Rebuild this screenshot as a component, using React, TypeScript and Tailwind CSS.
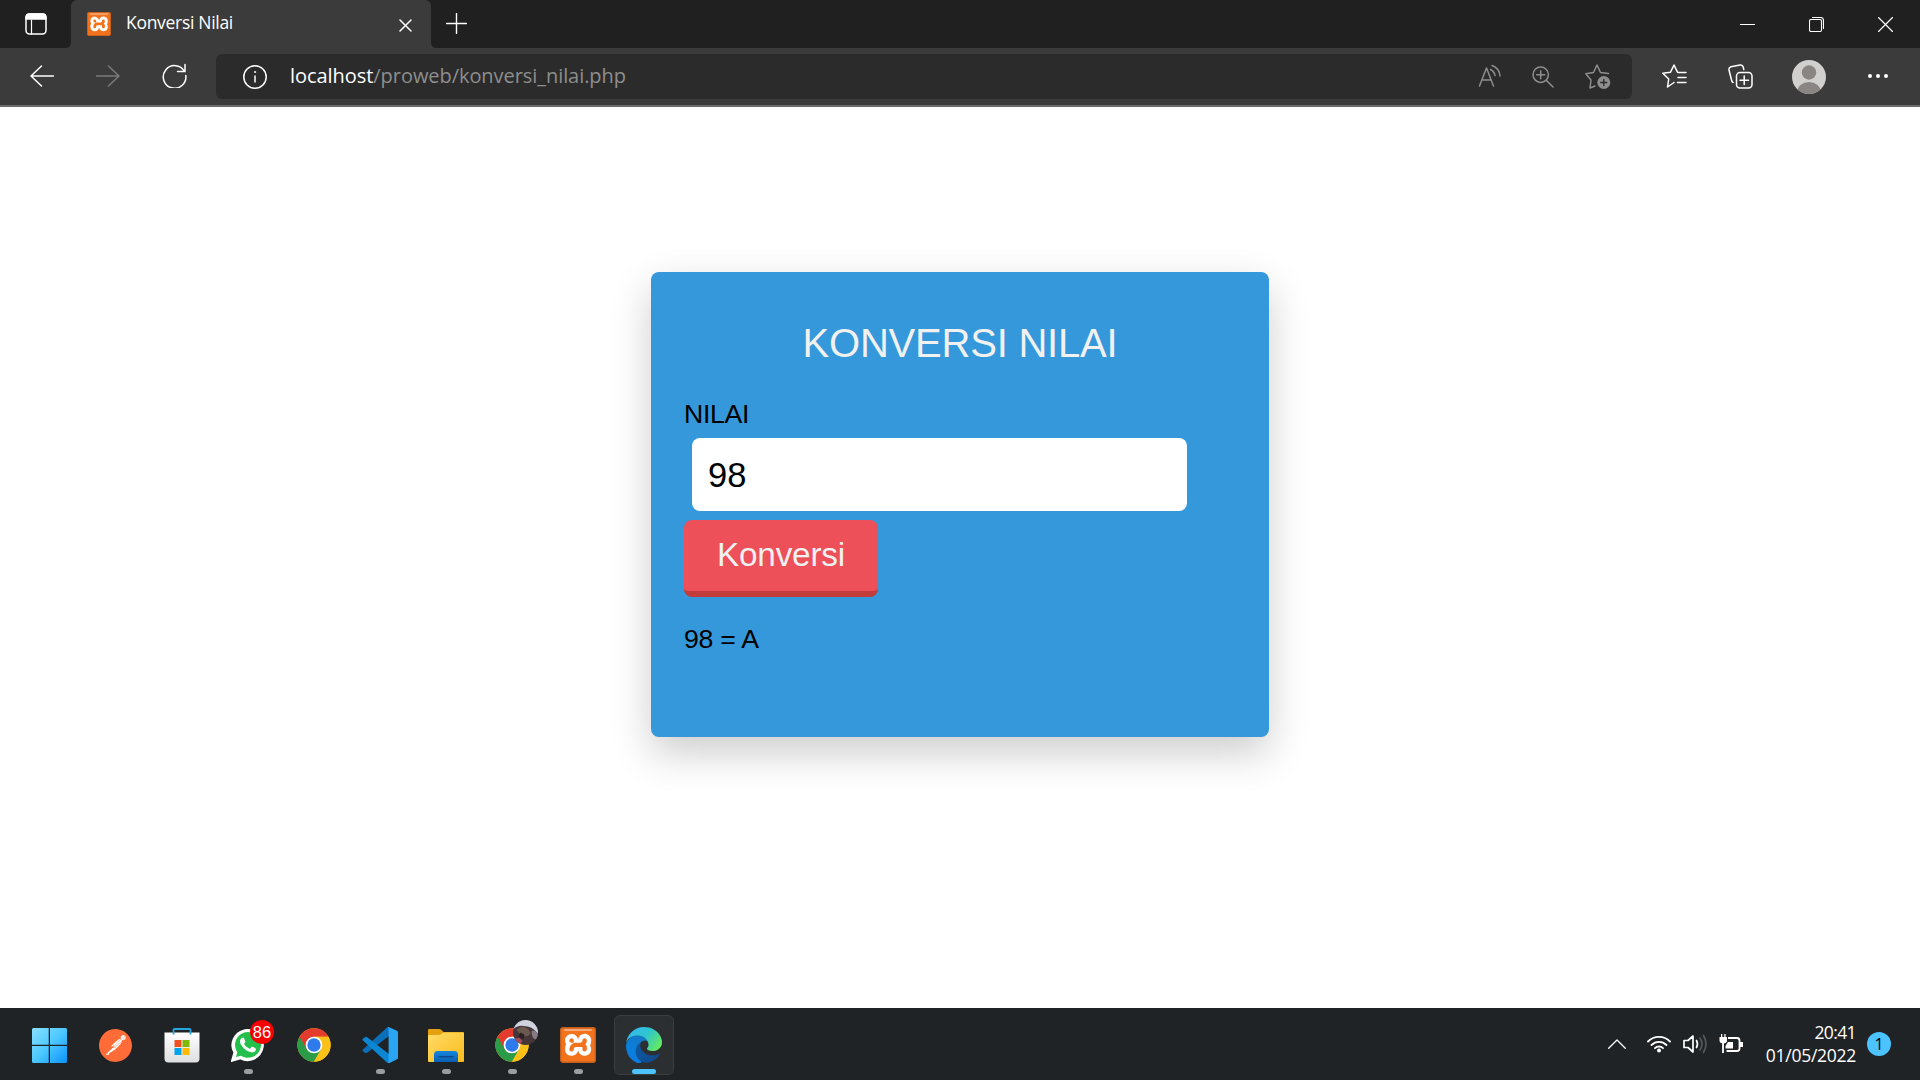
import type { ReactNode } from "react";
import { SiXampp, SiPostman } from "react-icons/si";
import { FaWhatsapp } from "react-icons/fa";

function Stroke({ w, h, sw = 1.5, className = "", children }: { w: number; h: number; sw?: number; className?: string; children: ReactNode }) {
  return (
    <svg width={w} height={h} viewBox={`0 0 ${w} ${h}`} fill="none" stroke="currentColor" strokeWidth={sw} strokeLinecap="round" strokeLinejoin="round" className={`block shrink-0 ${className}`}>
      {children}
    </svg>
  );
}

function Xampp({ size }: { size: number }) {
  return (
    <svg width={size} height={size} viewBox="0 0 36 36" className="block shrink-0">
      <rect x="3" y="5" width="30" height="27" fill="#fff" />
      <SiXampp x="0" y="0" width="36" height="36" size={36} color="#f3731d" />
      <rect x=".7" y=".7" width="34.6" height="34.6" rx="2.5" fill="none" stroke="#c4601f" strokeWidth="1.4" />
      <rect x="4" y="2" width="28" height="2" rx="1" fill="#f6ab7c" />
    </svg>
  );
}

function Chrome() {
  return (
    <svg width="34" height="34" viewBox="0 0 48 48" className="block">
      <circle cx="24" cy="24" r="23.5" fill="#fbc116" />
      <path d="M24 24 3.65 12.25A23.5 23.5 0 0 0 24 47.5L34.2 29.9Z" fill="#2c9b48" />
      <path d="M3.65 12.25A23.5 23.5 0 0 1 44.4 12.3H24L13.8 29.9Z" fill="#e33b2e" />
      <path d="M24 12.3h20.4A23.5 23.5 0 0 1 24 47.5l10.2-17.6Z" fill="#fbc116" />
      <circle cx="24" cy="24" r="11.8" fill="#fff" />
      <circle cx="24" cy="24" r="9.4" fill="#2f7bee" />
    </svg>
  );
}

function WindowsLogo() {
  return (
    <svg width="35" height="35" viewBox="0 0 35 35" className="mr-[2px]">
      <defs>
        <linearGradient id="win" x1="0" y1="0" x2="1" y2="1">
          <stop offset="0" stopColor="#8ae0ff" />
          <stop offset=".5" stopColor="#4cc8ff" />
          <stop offset="1" stopColor="#0a93fa" />
        </linearGradient>
      </defs>
      <path fill="url(#win)" d="M1.5 0H16.7V16.7H0V1.5Q0 0 1.5 0ZM18 0H33.5Q35 0 35 1.5V16.7H18ZM0 18H16.7V35H1.5Q0 35 0 33.5ZM18 18H35V33.5Q35 35 33.5 35H18Z" />
    </svg>
  );
}

function Postman() {
  return (
    <svg width="33" height="33" viewBox="0 0 33 33" className="mr-px">
      <circle cx="16.5" cy="16.5" r="15.5" fill="#fff" />
      <SiPostman x="0" y="0" size={33} color="#ff6c37" />
    </svg>
  );
}

function Store() {
  return (
    <svg width="36" height="36" viewBox="0 0 36 36" className="mr-px">
      <defs>
        <linearGradient id="bag" x1="0" y1="0" x2="0" y2="1">
          <stop offset="0" stopColor="#fff" />
          <stop offset="1" stopColor="#dedede" />
        </linearGradient>
      </defs>
      <path d="M.5 5.500h35V31.500q0 4-4 4h-27q-4 0-4-4Z" fill="url(#bag)" />
      <path d="M9.500 7.500V3q0-1 1-1h15q1 0 1 1v4.500" fill="none" stroke="#22a7e0" strokeWidth="1.800" />
      <path d="M10.500 13h7v7h-7z" fill="#f25022" />
      <path d="M18.500 13h7v7h-7z" fill="#7fba00" />
      <path d="M10.500 21h7v7h-7z" fill="#00a4ef" />
      <path d="M18.500 21h7v7h-7z" fill="#ffb900" />
    </svg>
  );
}

function WhatsApp() {
  return (
    <svg width="34" height="34" viewBox="0 0 34 34">
      <path d="M1 33 3.300 24.500A15 15 0 1 1 9.500 30.700Z" fill="#25c04c" />
      <FaWhatsapp x="-1" y="-1" size={36} color="#fff" />
      <path d="M1.300 32.500 3.600 24.500A14.800 14.800 0 1 1 9.500 30.200Z" fill="none" stroke="#fff" strokeWidth="2.400" />
    </svg>
  );
}

function VsCode() {
  return (
    <svg width="36" height="36" viewBox="0 0 36 36">
      <path d="M.7 22.800 25 .6Q26 0 27 .3V9L5.200 25.800Q4 26.600 3 25.800L.8 24.200Q0 23.500 .7 22.800Z" fill="#0a6fb8" />
      <path d="M.7 13.200 25 35.400Q26 36 27 35.700V27L5.200 10.200Q4 9.400 3 10.200L.8 11.800Q0 12.500 .7 13.200Z" fill="#0b86d2" />
      <path d="M26.500 0 35 3.700Q36 4.200 36 5.300V30.700Q36 31.800 35 32.300L27.600 35.900Q26.500 36.200 25.500 35.500 26.600 35 26.600 33.500V2.500Q26.600 1 25.500.5Q26 0 26.500 0Z" fill="#2aa5f3" />
    </svg>
  );
}

function Explorer() {
  return (
    <svg width="36" height="33" viewBox="0 0 36 33">
      <defs>
        <linearGradient id="fold" x1="0" y1="0" x2="1" y2="1">
          <stop offset="0" stopColor="#ffdc68" />
          <stop offset="1" stopColor="#fcbb1c" />
        </linearGradient>
        <linearGradient id="hand" x1="0" y1="0" x2="0" y2="1">
          <stop offset="0" stopColor="#1588dc" />
          <stop offset="1" stopColor="#0b5fb4" />
        </linearGradient>
      </defs>
      <path d="M0 1q0-1 1-1h10q1.500 0 2.500 1l2 2H35q1 0 1 1v10H0Z" fill="#e3a00f" />
      <path d="M0 6h10q2 0 3.500-1.200Q15 3.500 17 3.500H35q1 0 1 1V32q0 1-1 1H1q-1 0-1-1Z" fill="url(#fold)" />
      <path d="M6 33V25.500q0-3.500 3.500-3.500h17q3.500 0 3.500 3.500V33Z" fill="url(#hand)" />
      <path d="M11 27.700h14" stroke="#0b4a8c" strokeWidth="1.400" strokeLinecap="round" />
    </svg>
  );
}

function EdgeLogo() {
  return (
    <svg width="36" height="36" viewBox="0 0 256 256">
      <defs>
        <linearGradient id="e1" x1=".2" y1="0" x2="1" y2=".6">
          <stop offset="0" stopColor="#0c59a4" />
          <stop offset="1" stopColor="#114a8b" />
        </linearGradient>
        <linearGradient id="e2" x1=".7" y1="0" x2=".3" y2="1">
          <stop offset="0" stopColor="#1478c4" />
          <stop offset=".6" stopColor="#0b7fdc" />
          <stop offset="1" stopColor="#0a78de" />
        </linearGradient>
        <linearGradient id="e3" x1="0" y1=".2" x2="1" y2=".7">
          <stop offset="0" stopColor="#35b9f1" />
          <stop offset=".5" stopColor="#2ec5cf" />
          <stop offset="1" stopColor="#66eb5e" />
        </linearGradient>
      </defs>
      <path fill="url(#e1)" d="M235.680 190.380a93.730 93.730 0 0 1-10.540 4.710 101.870 101.870 0 0 1-35.900 6.460c-47.320 0-88.540-32.550-88.540-74.320A31.480 31.480 0 0 1 117.130 99.830c-42.800 1.800-53.800 46.400-53.800 72.530 0 73.880 68.090 81.370 82.760 81.370 7.910 0 19.840-2.300 27-4.560l1.310-.44a128.340 128.340 0 0 0 66.600-52.800 4 4 0 0 0-5.320-5.550z" />
      <path fill="url(#e2)" d="M105.730 241.420a79.200 79.200 0 0 1-22.740-21.340 80.720 80.720 0 0 1 34.140-120.250c3.570-1.680 9.660-4.710 17.780-4.560a33.790 33.790 0 0 1 26.800 13.510 33.900 33.900 0 0 1 6.600 19.200c0-.21 -8.310-69.640-88.310-69.640-43.900 0-80 41.660-80 78.210a130.150 130.150 0 0 0 12.110 56 128 128 0 0 0 156.380 67.110 75.550 75.550 0 0 1-62.780-8z" />
      <path fill="url(#e3)" d="M152.330 148.860c-.81 1.050-3.300 2.500-3.300 5.660 0 2.610 1.700 5.120 4.720 7.230 14.380 10 41.490 8.680 41.560 8.680a59.560 59.560 0 0 0 30.270-8.350A61.380 61.380 0 0 0 256 109.230c.26-22.410-8-37.310-11.340-43.910C223.460 23.840 177.720 0 128 0A128 128 0 0 0 0 126.200c.48-36.540 36.800-66.050 80-66.050 3.500 0 23.460.34 42 10.070 16.340 8.580 24.900 18.940 30.850 29.210 6.180 10.670 7.280 24.150 7.280 29.520s-2.740 13.330-7.800 19.910z" />
    </svg>
  );
}

function ProfileBadge() {
  return (
    <svg width="25" height="25" viewBox="0 0 24 24" className="absolute top-[5px] left-[31px]">
      <clipPath id="pb"><circle cx="12" cy="12" r="12" /></clipPath>
      <g clipPath="url(#pb)">
        <path d="M0 0h24v24H0z" fill="#45363a" />
        <path d="M0 9Q5 4 12 6q6 0 12 7V0H0Z" fill="#cfd3dd" />
        <path d="M3 9q6-5 12 0l2 4q-3 4-9 2Z" fill="#6b584e" />
        <path d="M18 10q4 0 6 3v6q-5 0-6-5Z" fill="#857b84" />
        <path d="M1 18l5-1 3 3-2 4H2z" fill="#a24d58" />
        <path d="M7 12l4 2-1 5-5-3z" fill="#2b2020" />
      </g>
    </svg>
  );
}

function TaskItem({ children, state }: { children: ReactNode; state?: "open" | "active" }) {
  return (
    <div className={`relative flex h-[60px] w-[60px] items-center justify-center rounded-md ${state === "active" ? "border border-[#393d40] bg-[#2c2f32]" : ""}`}>
      {children}
      {state === "open" && <span className="absolute bottom-[1px] left-[26px] h-[5px] w-[9px] rounded-full bg-[#9b9d9e]" />}
      {state === "active" && <span className="absolute bottom-0 left-[17px] h-[5px] w-6 rounded-full bg-[#4cc2ff]" />}
    </div>
  );
}

function TabStrip() {
  return (
    <div className="flex h-12 items-stretch bg-[#202020] text-white">
      <div className="flex w-[71px] items-center pl-[25px]">
        <Stroke w={22} h={22}>
          <rect x="1" y="1" width="20" height="20" rx="3.500" />
          <path d="M1 6V4.500Q1 1 4.500 1h13Q21 1 21 4.500V6Z" fill="currentColor" />
          <path d="M6.500 7v14" strokeWidth="1.200" />
        </Stroke>
      </div>
      <div className="relative flex w-[360px] items-center rounded-t-md bg-[#3b3b3b] pl-4">
        <svg width="6" height="6" viewBox="0 0 6 6" className="absolute bottom-0 -left-[6px]"><path d="M6 0v6H0Q6 6 6 0" fill="#3b3b3b" /></svg>
        <svg width="6" height="6" viewBox="0 0 6 6" className="absolute -right-[6px] bottom-0"><path d="M0 0v6h6Q0 6 0 0" fill="#3b3b3b" /></svg>
        <Xampp size={24} />
        <span className="mb-[2px] ml-[15px] w-[273px] text-[17.500px] leading-none tracking-[-0.300px] whitespace-nowrap">Konversi Nilai</span>
        <Stroke w={13} h={13} className="mt-[2px]"><path d="M1 1l11 11M12 1 1 12" /></Stroke>
      </div>
      <div className="flex flex-1 items-center pl-[15px]">
        <Stroke w={21} h={21} className="mb-[2px]"><path d="M10.500.5v20M.5 10.500h20" strokeWidth="1.400" /></Stroke>
      </div>
      <div className="flex items-center gap-[54px] pr-[27px]">
        <Stroke w={15} h={15} sw={1}><path d="M0 7.500h15" /></Stroke>
        <Stroke w={15} h={15} sw={1.1}>
          <rect x=".5" y="2.500" width="12" height="12" rx="1.500" />
          <path d="M3.500.5h8q3 0 3 3v8" />
        </Stroke>
        <Stroke w={15} h={15} sw={1.2}><path d="M.5.5l14 14M14.500.5l-14 14" /></Stroke>
      </div>
    </div>
  );
}

function Toolbar() {
  return (
    <div className="flex h-[59px] items-center border-b-2 border-[#6b6b6b] bg-[#3b3b3b] text-white">
      <div className="flex w-[216px] items-center gap-[42px] pb-[2px] pl-[30px]">
        <Stroke w={24} h={22}><path d="M11.500 1 1 11l10.500 10M1 11h22.500" /></Stroke>
        <Stroke w={24} h={22} className="text-[#7b7b7b]"><path d="M12.500 1 23 11 12.500 21M23 11H.5" /></Stroke>
        <Stroke w={25} h={25}><path d="M22.500 8.500A11.300 11.300 0 1 0 23.800 12.500M23 1.500v7h-7.500" strokeLinejoin="miter" /></Stroke>
      </div>
      <div className="flex h-[45px] w-[1416px] items-center rounded-md bg-[#2b2b2b] pr-[21px] pl-[27px]">
        <Stroke w={24} h={24}>
          <circle cx="12" cy="12" r="11.200" />
          <path d="M12 11v6" />
          <circle cx="12" cy="7" r=".6" fill="currentColor" strokeWidth=".8" />
        </Stroke>
        <span className="mb-px ml-[23px] flex-1 text-[20px] leading-none tracking-[-0.060px] whitespace-nowrap text-[#8e8e8e]">
          <span className="tracking-[-0.050px] text-white">localhost</span>
          <span>/proweb/konversi_nilai.php</span>
        </span>
        <div className="flex items-center text-[#8e8e8e]">
          <Stroke w={24} h={24} className="mb-px">
            <path d="M1.500 22 8.500 4l7 18M4 16h9" />
            <path d="M12.500 5.500a8 8 0 0 1 4.500 6M14 1.500a12 12 0 0 1 8 10.500" />
          </Stroke>
          <Stroke w={22} h={22} className="ml-[30px]">
            <circle cx="8.700" cy="8.700" r="7.700" />
            <path d="M14.500 14.500l6.500 6.500M8.700 4.700v8M4.700 8.700h8" />
          </Stroke>
          <Stroke w={26} h={26} className="ml-[31px]">
            <path d="M10 22l-5 2 1-8L.8 9.800 8.500 8.500 12 1l3.500 7.500 8 1" />
            <circle cx="18.800" cy="18.500" r="6.500" fill="currentColor" stroke="none" />
            <path d="M18.800 15.500v6M15.800 18.500h6" stroke="#2b2b2b" strokeWidth="1.300" />
          </Stroke>
        </div>
      </div>
      <div className="flex items-center pl-[30px]">
        <Stroke w={25} h={25}>
          <path d="M12 18.500 5.500 23l1.200-8L.8 9.300l7.700-1.100L12 1l3.500 7.200 1 .3h7.500M16 13.500h8M15.500 18.500H24" />
        </Stroke>
        <Stroke w={25} h={25} className="ml-[41px]">
          <rect x="8.500" y="8.500" width="15.500" height="15.500" rx="3.500" />
          <path d="M16.200 12v8.500M12 16.200h8.500M5 18.500Q4 18 3.500 16L1 6Q.5 3.500 3 2.800L12 1q2.500-.5 3.200 2l.6 2.500" />
        </Stroke>
        <svg width="34" height="34" viewBox="0 0 34 34" className="ml-[39px] block">
          <clipPath id="av"><circle cx="17" cy="17" r="17" /></clipPath>
          <g clipPath="url(#av)">
            <path d="M0 0h34v34H0z" fill="#d2d0ce" />
            <circle cx="17" cy="12.500" r="7.200" fill="#8a8583" />
            <ellipse cx="17" cy="31" rx="11.500" ry="9" fill="#8a8583" />
          </g>
        </svg>
        <svg width="20" height="4" viewBox="0 0 20 4" fill="#fff" className="mb-px ml-[42px] block">
          <circle cx="2" cy="2" r="2" /><circle cx="10" cy="2" r="2" /><circle cx="18" cy="2" r="2" />
        </svg>
      </div>
    </div>
  );
}

function Page() {
  return (
    <main className="flex h-[901px] justify-center bg-white pt-[165px] font-['Liberation_Sans',Arial,sans-serif]">
      <form className="flex h-[465px] w-[618px] flex-col items-start rounded-[8px] bg-[#3498db] px-[33px] pt-[48px] text-black shadow-[0_16px_40px_rgba(0,0,0,0.2)]">
        <h1 className="w-full text-center text-[40px] leading-[46px] tracking-[-0.220px] text-[#f1f1f1]">KONVERSI NILAI</h1>
        <label className="mt-[33px] text-[26.670px] leading-[30px] tracking-[-0.300px]">NILAI</label>
        <input readOnly value="98" className="mt-[9px] ml-[8px] h-[73px] w-[495px] rounded-[8px] bg-white px-[16px] pt-px text-[34.500px] outline-none" />
        <button type="button" className="mt-[9px] h-[77px] w-[194px] rounded-[8px] border-b-[6px] border-[#c23c3c] bg-[#ed5059] pb-[2px] text-[33.330px] tracking-[-0.200px] text-[#f1f1f1]">Konversi</button>
        <p className="mt-[27px] text-[26.670px] leading-[30px] tracking-[-0.250px]">98 = A</p>
      </form>
    </main>
  );
}

function Taskbar() {
  return (
    <footer className="flex h-[72px] items-center justify-between bg-[#1f2326] pt-[2px] pr-[29px] pl-5 text-white">
      <div className="flex gap-[6px]">
        <TaskItem><WindowsLogo /></TaskItem>
        <TaskItem><Postman /></TaskItem>
        <TaskItem><Store /></TaskItem>
        <TaskItem state="open">
          <WhatsApp />
          <span className="absolute top-[5px] left-[32px] flex h-6 w-6 items-center justify-center rounded-full bg-[#f60000] font-['Liberation_Sans',Arial,sans-serif] text-[16.500px] leading-none">86</span>
        </TaskItem>
        <TaskItem><Chrome /></TaskItem>
        <TaskItem state="open"><VsCode /></TaskItem>
        <TaskItem state="open"><Explorer /></TaskItem>
        <TaskItem state="open"><Chrome /><ProfileBadge /></TaskItem>
        <TaskItem state="open"><Xampp size={36} /></TaskItem>
        <TaskItem state="active"><EdgeLogo /></TaskItem>
      </div>
      <div className="flex items-center pb-[2px]">
        <Stroke w={18} h={10} sw={1.3}><path d="M.7 9.300 9 1l8.300 8.300" /></Stroke>
        <Stroke w={24} h={18} sw={1.8} className="ml-[21px]">
          <path d="M1 6.500a15.500 15.500 0 0 1 22 0M4.500 10a10.500 10.500 0 0 1 15 0M8 13.200a5.600 5.600 0 0 1 8 0" />
          <circle cx="12" cy="15.500" r="2" fill="currentColor" stroke="none" />
        </Stroke>
        <Stroke w={24} h={20} sw={1.7} className="ml-3">
          <path d="M1 6.500v7h4l5 4.500V2L5 6.500ZM13.500 6.500q2 3.500 0 7" />
          <path d="M17 4q4 6 0 12M20.500 1.500q5 8.500 0 17" stroke="#55595c" />
        </Stroke>
        <svg width="24" height="20" viewBox="0 0 24 20" className="ml-[12px] block" fill="none" stroke="#fff" strokeWidth="1.800">
          <path d="M9 4h9q2.500 0 2.500 2.500v8q0 2.500-2.500 2.500H7.500M4 9v10" />
          <path d="M.5 3h7.500v3.500Q8 9.500 4.300 9.500T.5 6.500ZM2 0h1.300v3H2ZM5.300 0h1.300v3H5.300ZM6.500 12 9 8h5v6.500H6.500ZM21 8h3v5h-3Z" fill="#fff" stroke="none" />
        </svg>
        <div className="ml-[13px] flex w-[100px] flex-col items-end text-[17.500px] leading-[23px] whitespace-nowrap">
          <span className="tracking-[-0.600px]">20:41</span>
          <span className="tracking-[-0.270px]">01/05/2022</span>
        </div>
        <span className="ml-[11px] flex h-6 w-6 items-center justify-center rounded-full bg-[#4cc2ff] text-[16px] leading-none text-black">1</span>
      </div>
    </footer>
  );
}

export default function App() {
  return (
    <div className="flex h-[1080px] w-[1920px] flex-col overflow-hidden bg-white font-['Open_Sans','Noto_Sans',sans-serif]">
      <TabStrip />
      <Toolbar />
      <Page />
      <Taskbar />
    </div>
  );
}
